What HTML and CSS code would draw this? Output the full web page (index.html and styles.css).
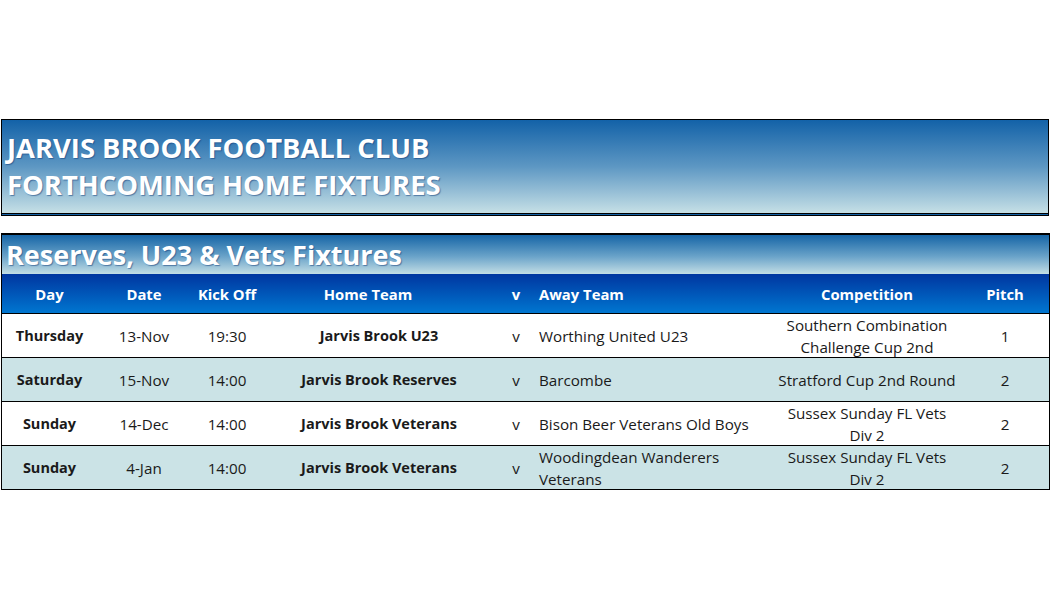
FILE: index.html
```html
<!DOCTYPE html>
<html>
<head>
<meta charset="utf-8">
<link rel="stylesheet" href="styles.css">
</head>
<body>
<div class="page">
  <div class="title-box">
    <div class="title-line">JARVIS BROOK FOOTBALL CLUB</div>
    <div class="title-line">FORTHCOMING HOME FIXTURES</div>
  </div>
  <div class="fixtures">
    <div class="section-title">Reserves, U23 &amp; Vets Fixtures</div>
    <table class="grid">
      <colgroup>
        <col class="c-day"><col class="c-date"><col class="c-ko"><col class="c-home"><col class="c-v"><col class="c-away"><col class="c-comp"><col class="c-pitch">
      </colgroup>
      <thead>
        <tr>
          <th>Day</th><th>Date</th><th>Kick Off</th><th class="th-home">Home Team</th><th>v</th><th class="left">Away Team</th><th>Competition</th><th>Pitch</th>
        </tr>
      </thead>
      <tbody>
        <tr>
          <td class="b">Thursday</td><td>13-Nov</td><td>19:30</td><td class="b">Jarvis Brook U23</td><td>v</td><td class="left">Worthing United U23</td><td><div class="cell">Southern Combination<br>Challenge Cup 2nd</div></td><td>1</td>
        </tr>
        <tr class="alt">
          <td class="b">Saturday</td><td>15-Nov</td><td>14:00</td><td class="b">Jarvis Brook Reserves</td><td>v</td><td class="left">Barcombe</td><td>Stratford Cup 2nd Round</td><td>2</td>
        </tr>
        <tr>
          <td class="b">Sunday</td><td>14-Dec</td><td>14:00</td><td class="b">Jarvis Brook Veterans</td><td>v</td><td class="left">Bison Beer Veterans Old Boys</td><td><div class="cell">Sussex Sunday FL Vets<br>Div 2</div></td><td>2</td>
        </tr>
        <tr class="alt">
          <td class="b">Sunday</td><td>4-Jan</td><td>14:00</td><td class="b">Jarvis Brook Veterans</td><td>v</td><td class="left"><div class="cell">Woodingdean Wanderers<br>Veterans</div></td><td><div class="cell">Sussex Sunday FL Vets<br>Div 2</div></td><td>2</td>
        </tr>
      </tbody>
    </table>
  </div>
</div>
</body>
</html>
```

FILE: styles.css
```css
html, body {
  margin: 0;
  padding: 0;
  background: #ffffff;
}
body {
  font-family: "Open Sans", "DejaVu Sans", sans-serif;
  color: #1a1a1a;
}
.page {
  width: 1051px;
  padding-top: 119px;
}
.title-box {
  margin-left: 1px;
  width: 1048px;
  height: 97px;
  border: 1px solid #000;
  border-bottom: 3px double #000;
  background: linear-gradient(to bottom, #1362a8 0%, #5d97c3 50%, #c6e0e6 100%);
  padding: 9px 0 0 5px;
  box-sizing: border-box;
}
.title-line {
  color: #ffffff;
  font-weight: 700;
  font-size: 27.4px;
  line-height: 37px;
  text-shadow: 1px 1px 1px rgba(20, 60, 120, 0.55);
  white-space: nowrap;
}
.fixtures {
  margin-top: 17px;
  margin-left: 1px;
  width: 1049px;
  border-top: 2px solid #000;
  border-left: 1px solid #000;
  border-right: 1px solid #000;
  box-sizing: border-box;
}
.section-title {
  height: 39px;
  background: linear-gradient(to bottom, #1665a6 0%, #6aa3c9 55%, #c3dee5 100%);
  color: #fff;
  font-weight: 700;
  font-size: 27px;
  line-height: 40px;
  padding-left: 4px;
  text-shadow: 1px 1px 1px rgba(20, 60, 120, 0.55);
  white-space: nowrap;
}
.grid {
  width: 1047px;
  border-collapse: collapse;
  table-layout: fixed;
}
.c-day { width: 95px; }
.c-date { width: 94px; }
.c-ko { width: 72px; }
.c-home { width: 232px; }
.c-v { width: 42px; }
.c-away { width: 236px; }
.c-comp { width: 188px; }
.c-pitch { width: 88px; }
.grid th {
  height: 39px;
  padding: 0;
  background: linear-gradient(to bottom, #0036a0 0%, #0056b8 50%, #0076d0 100%);
  color: #fff;
  font-weight: 700;
  font-size: 14.8px;
  text-align: center;
  border-bottom: 1px solid #000;
  white-space: nowrap;
}
.grid th.th-home { padding-right: 22px; }
.grid td {
  height: 43px;
  padding: 0;
  font-size: 15.2px;
  line-height: 22px;
  text-align: center;
  border-bottom: 1px solid #000;
  white-space: nowrap;
  color: #1a1a1a;
}
.grid .cell {
  height: 43px;
  display: flex;
  flex-direction: column;
  justify-content: center;
  line-height: 22px;
}
.grid .left {
  text-align: left;
  padding-left: 2px;
}
.grid td.b {
  font-weight: 700;
  font-size: 14.5px;
}
.grid tr.alt td { background: #cbe3e6; }
```
